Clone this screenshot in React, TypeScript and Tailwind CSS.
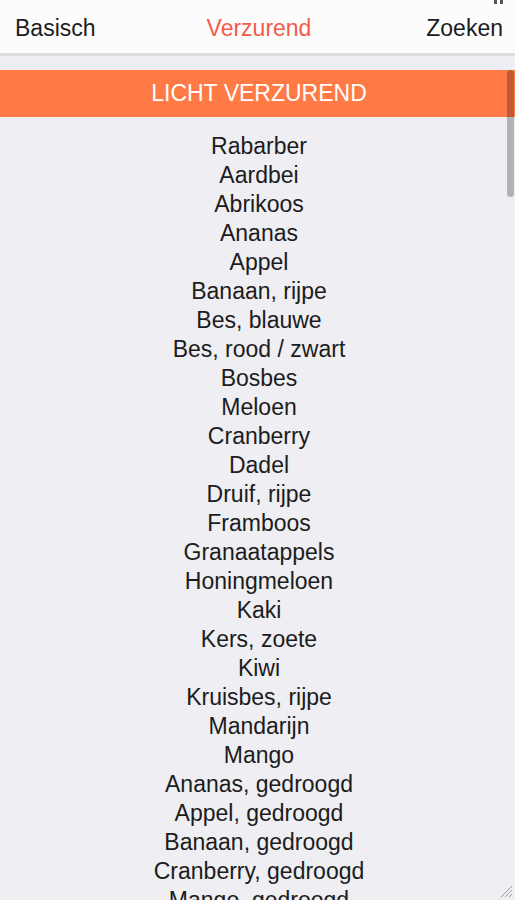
const fruits = [
  'Rabarber',
  'Aardbei',
  'Abrikoos',
  'Ananas',
  'Appel',
  'Banaan, rijpe',
  'Bes, blauwe',
  'Bes, rood / zwart',
  'Bosbes',
  'Meloen',
  'Cranberry',
  'Dadel',
  'Druif, rijpe',
  'Framboos',
  'Granaatappels',
  'Honingmeloen',
  'Kaki',
  'Kers, zoete',
  'Kiwi',
  'Kruisbes, rijpe',
  'Mandarijn',
  'Mango',
  'Ananas, gedroogd',
  'Appel, gedroogd',
  'Banaan, gedroogd',
  'Cranberry, gedroogd',
  'Mango, gedroogd',
];

export default function App() {
  return (
    <div
      className="relative h-[900px] w-[515px] overflow-hidden bg-[#eeeef3] text-[#1c1c1c]"
      style={{ fontFamily: '"Liberation Sans", Arial, sans-serif' }}
    >
      <header className="grid h-[56px] grid-cols-3 items-center border-b-[3px] border-[#dddde0] bg-[#fcfcfc] pl-[15px] pr-[12px] pt-[3px] text-[23px]">
        <span className="text-left">Basisch</span>
        <span className="text-center text-[#f35b4b]">Verzurend</span>
        <span className="text-right">Zoeken</span>
      </header>

      <div className="mt-[14px] flex h-[47px] items-center justify-center bg-[#ff7a45] pl-[3px] text-[23px] text-white">
        LICHT VERZUREND
      </div>

      <ul className="flex flex-col items-center pl-[3px] pt-[15px] text-[23px] leading-[29px]">
        {fruits.map((f) => (
          <li key={f}>{f}</li>
        ))}
      </ul>

      {/* scrollbar thumb */}
      <div className="absolute right-[1px] top-[70px] h-[127px] w-[7px] rounded-full bg-black/25" />

      {/* top-right marks */}
      <svg className="absolute right-[10px] top-0" width="12" height="6" viewBox="0 0 12 6">
        <rect x="1" y="0" width="3" height="4" fill="#555" />
        <rect x="7" y="0" width="3" height="4" fill="#555" />
      </svg>

      {/* resize handle */}
      <svg className="absolute bottom-[2px] right-[2px]" width="14" height="14" viewBox="0 0 14 14">
        <line x1="13" y1="2" x2="2" y2="13" stroke="#9a9a9f" strokeWidth="1" />
        <line x1="13" y1="6" x2="6" y2="13" stroke="#9a9a9f" strokeWidth="1" />
        <line x1="13" y1="10" x2="10" y2="13" stroke="#9a9a9f" strokeWidth="1" />
      </svg>
    </div>
  );
}
